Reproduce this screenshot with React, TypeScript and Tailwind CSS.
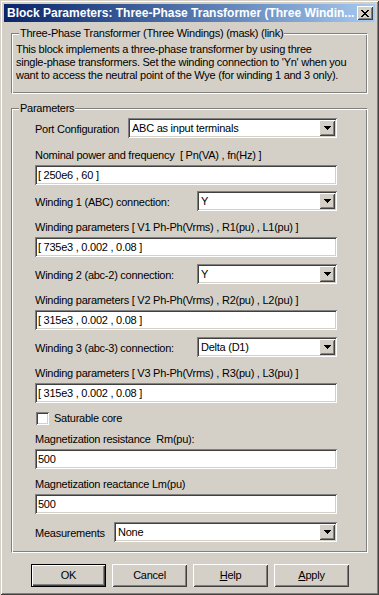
import React from "react";

const SUNKEN =
  "bg-white shadow-[inset_1px_1px_0_#808080,inset_-1px_-1px_0_#ffffff,inset_2px_2px_0_#404040,inset_-2px_-2px_0_#d4d0c8]";
const RAISED =
  "bg-[#d4d0c8] shadow-[inset_1px_1px_0_#ffffff,inset_-1px_-1px_0_#404040,inset_2px_2px_0_#d4d0c8,inset_-2px_-2px_0_#808080]";
const ETCH =
  "border border-t-[#808080] border-l-[#808080] border-r-white border-b-white shadow-[inset_1px_1px_0_#ffffff,inset_-1px_-1px_0_#808080]";

function Arrow() {
  return (
    <svg width="7" height="4" viewBox="0 0 7 4" shapeRendering="crispEdges">
      <rect x="0" y="0" width="7" height="1" fill="#000" />
      <rect x="1" y="1" width="5" height="1" fill="#000" />
      <rect x="2" y="2" width="3" height="1" fill="#000" />
      <rect x="3" y="3" width="1" height="1" fill="#000" />
    </svg>
  );
}

function CloseX() {
  return (
    <svg width="8" height="7" viewBox="0 0 8 7" shapeRendering="crispEdges">
      <rect x="0" y="0" width="2" height="1" fill="#000" />
      <rect x="6" y="0" width="2" height="1" fill="#000" />
      <rect x="1" y="1" width="2" height="1" fill="#000" />
      <rect x="5" y="1" width="2" height="1" fill="#000" />
      <rect x="2" y="2" width="4" height="1" fill="#000" />
      <rect x="3" y="3" width="2" height="1" fill="#000" />
      <rect x="2" y="4" width="4" height="1" fill="#000" />
      <rect x="1" y="5" width="2" height="1" fill="#000" />
      <rect x="5" y="5" width="2" height="1" fill="#000" />
      <rect x="0" y="6" width="2" height="1" fill="#000" />
      <rect x="6" y="6" width="2" height="1" fill="#000" />
    </svg>
  );
}

function Select({ value, className }: { value: string; className: string }) {
  return (
    <div className={`flex h-[20px] shrink-0 items-center ${SUNKEN} ${className}`}>
      <span className="flex-1 whitespace-nowrap pl-[4px] leading-[13px]">{value}</span>
      <div className={`mr-[2px] flex h-[16px] w-[16px] items-center justify-center ${RAISED}`}>
        <Arrow />
      </div>
    </div>
  );
}

function Field({ value, className = "" }: { value: string; className?: string }) {
  return (
    <div className={`flex h-[20px] items-center ${SUNKEN} ${className}`}>
      <span className="whitespace-nowrap pl-[3px] leading-[13px]">{value}</span>
    </div>
  );
}

function Label({ children, className = "" }: { children: React.ReactNode; className?: string }) {
  return <div className={`whitespace-nowrap leading-[13px] ${className}`}>{children}</div>;
}

function Row({ label, value, selClass, className }: { label: string; value: string; selClass: string; className: string }) {
  return (
    <div className={`flex items-center ${className}`}>
      <span className="whitespace-nowrap pt-[3px] leading-[13px]">{label}</span>
      <Select value={value} className={`ml-auto ${selClass}`} />
    </div>
  );
}

function Button({ children, def = false }: { children: React.ReactNode; def?: boolean }) {
  return (
    <div
      className={`flex h-[23px] w-[75px] items-center justify-center leading-[13px] ${
        def
          ? "border border-black bg-[#d4d0c8] shadow-[inset_1px_1px_0_#ffffff,inset_-1px_-1px_0_#404040,inset_-2px_-2px_0_#808080]"
          : RAISED
      }`}
    >
      {children}
    </div>
  );
}

export default function App() {
  return (
    <div className="flex h-[595px] w-[379px] flex-col bg-[#d4d0c8] p-[4px] font-['Liberation_Sans',Arial,sans-serif] text-[11px] tracking-[-0.25px] text-black shadow-[inset_1px_1px_0_#d4d0c8,inset_-1px_-1px_0_#404040,inset_2px_2px_0_#ffffff,inset_-2px_-2px_0_#808080]">
      {/* Title bar */}
      <div className="flex h-[18px] items-center bg-gradient-to-r from-[#0a246a] to-[#a6caf0]">
        <span className="whitespace-nowrap pl-[3px] text-[12px] font-bold leading-[18px] tracking-normal text-white">
          Block Parameters: Three-Phase Transformer (Three Windin...
        </span>
        <div className={`ml-auto mr-[2px] flex h-[14px] w-[16px] items-center justify-center ${RAISED}`}>
          <CloseX />
        </div>
      </div>

      <div className="flex flex-1 flex-col px-[7px]">
        {/* Description group */}
        <div className={`mt-[11px] flex flex-col pb-[11px] pl-[4px] ${ETCH}`}>
          <span className="-mt-[7px] ml-[3px] self-start whitespace-nowrap bg-[#d4d0c8] px-[1px] leading-[13px]">
            Three-Phase Transformer (Three Windings) (mask) (link)
          </span>
          <div className="mt-[3px] whitespace-nowrap leading-[13px]">
            This block implements a three-phase transformer by using three
            <br />
            single-phase transformers. Set the winding connection to 'Yn' when you
            <br />
            want to access the neutral point of the Wye (for winding 1 and 3 only).
          </div>
        </div>

        {/* Parameters group */}
        <div className={`mt-[14px] flex flex-col pb-[10px] pl-[23px] pr-[30px] ${ETCH}`}>
          <span className="-mt-[7px] -ml-[16px] self-start whitespace-nowrap bg-[#d4d0c8] px-[1px] leading-[13px]">
            Parameters
          </span>
          <Row label="Port Configuration" value="ABC as input terminals" selClass="w-[209px]" className="mt-[3px]" />
          <Label className="mt-[11px]">Nominal power and frequency&nbsp; [ Pn(VA) , fn(Hz) ]</Label>
          <Field value="[ 250e6 , 60 ]" className="mt-[3px]" />
          <Row label="Winding 1 (ABC) connection:" value="Y" selClass="w-[140px]" className="mt-[6px]" />
          <Label className="mt-[10px]">Winding parameters [ V1 Ph-Ph(Vrms) , R1(pu) , L1(pu) ]</Label>
          <Field value="[ 735e3 , 0.002 , 0.08 ]" className="mt-[3px]" />
          <Row label="Winding 2 (abc-2) connection:" value="Y" selClass="w-[140px]" className="mt-[7px]" />
          <Label className="mt-[10px]">Winding parameters [ V2 Ph-Ph(Vrms) , R2(pu) , L2(pu) ]</Label>
          <Field value="[ 315e3 , 0.002 , 0.08 ]" className="mt-[3px]" />
          <Row label="Winding 3 (abc-3) connection:" value="Delta (D1)" selClass="w-[140px]" className="mt-[7px]" />
          <Label className="mt-[10px]">Winding parameters [ V3 Ph-Ph(Vrms) , R3(pu) , L3(pu) ]</Label>
          <Field value="[ 315e3 , 0.002 , 0.08 ]" className="mt-[3px]" />
          <div className="mt-[9px] flex items-center">
            <div className={`ml-[1px] h-[13px] w-[13px] ${SUNKEN}`} />
            <span className="ml-[5px] whitespace-nowrap leading-[13px]">Saturable core</span>
          </div>
          <Label className="mt-[8px]">Magnetization resistance&nbsp; Rm(pu):</Label>
          <Field value="500" className="mt-[3px]" />
          <Label className="mt-[9px]">Magnetization reactance Lm(pu)</Label>
          <Field value="500" className="mt-[3px]" />
          <Row label="Measurements" value="None" selClass="w-[223px]" className="mt-[8px]" />
        </div>

        {/* Buttons */}
        <div className="ml-[20px] mt-[11px] flex gap-[6px]">
          <Button def>OK</Button>
          <Button>Cancel</Button>
          <Button>
            <span>
              <span className="underline underline-offset-[1px]">H</span>elp
            </span>
          </Button>
          <Button>
            <span>
              <span className="underline underline-offset-[1px]">A</span>pply
            </span>
          </Button>
        </div>
      </div>
    </div>
  );
}
